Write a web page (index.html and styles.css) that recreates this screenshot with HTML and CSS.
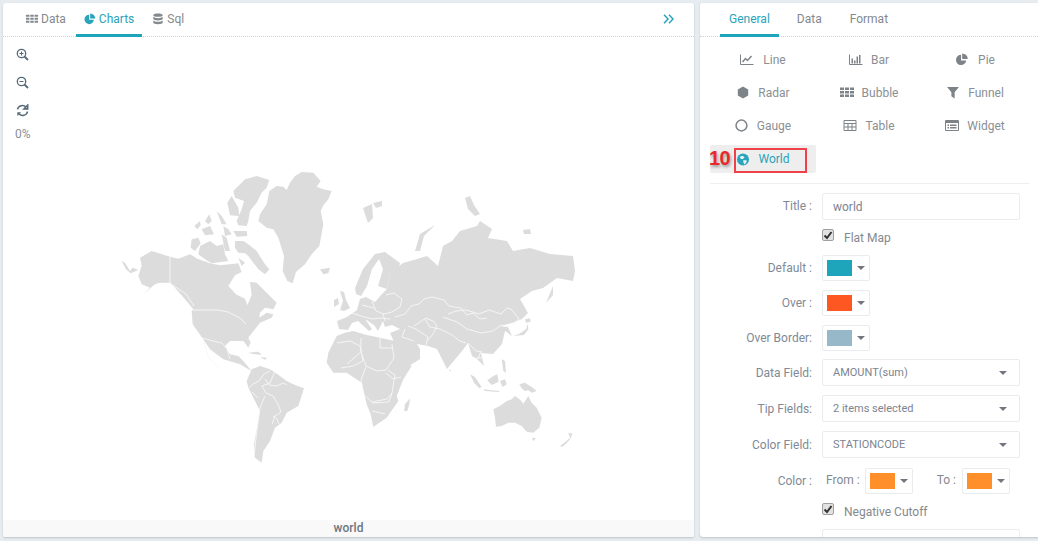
FILE: index.html
```html
<!DOCTYPE html>
<html lang="en">
<head>
<meta charset="utf-8">
<title>World chart</title>
<link rel="stylesheet" href="styles.css">
</head>
<body>
<svg class="defs" width="0" height="0" aria-hidden="true">
  <symbol id="i-th" viewBox="0 0 14 12"><path d="M0 1h4v2.500H0zM5 1h4v2.500H5zM10 1h4v2.500h-4zM0 4.500h4V7H0zM5 4.500h4V7H5zM10 4.500h4V7h-4zM0 8h4v2.500H0zM5 8h4v2.500H5zM10 8h4v2.500h-4z"/></symbol>
  <symbol id="i-pie" viewBox="0 0 14 14"><path d="M6 2a5.500 5.500 0 1 0 5.500 6H6zM7.200 .5v6h6a6 6 0 0 0-6-6z"/></symbol>
  <symbol id="i-db" viewBox="0 0 12 14"><path d="M6 .5c3 0 5.500.8 5.500 2S9 4.500 6 4.500.5 3.700.5 2.500 3 .5 6 .5zM.5 4.500c1 1 3 1.600 5.500 1.600s4.500-.6 5.500-1.600v2.200c0 1.200-2.500 2-5.500 2s-5.500-.8-5.500-2zM.5 8.800c1 1 3 1.500 5.500 1.500s4.500-.5 5.500-1.500V11c0 1.200-2.500 2-5.500 2s-5.500-.8-5.500-2z"/></symbol>
  <symbol id="i-line" viewBox="0 0 14 12"><path d="M.5 1v10h13" fill="none" stroke="currentColor"/><path d="M2.500 8.500 5.500 5l2 2 4-4.500" fill="none" stroke="currentColor" stroke-width="1.500"/></symbol>
  <symbol id="i-bar" viewBox="0 0 14 12"><path d="M.5 1v10h13" fill="none" stroke="currentColor"/><path d="M2.500 5h1.500v5H2.500zM5 7h1.500v3H5zM7.500 3h1.500v7H7.500zM10 1.500h1.500V10H10z"/></symbol>
  <symbol id="i-radar" viewBox="0 0 12 12"><path d="M6 .5 10.800 3.200V8.800L6 11.500 1.200 8.800V3.200z"/></symbol>
  <symbol id="i-filter" viewBox="0 0 12 12"><path d="M.5 1h11L7.500 5.800V11.500L4.500 9.500V5.800z"/></symbol>
  <symbol id="i-ring" viewBox="0 0 12 12"><circle cx="5.500" cy="6" r="5" fill="none" stroke="currentColor" stroke-width="1.400"/></symbol>
  <symbol id="i-table" viewBox="-.5 -1 14 13"><path d="M.5.500h12v10H.5zM.5 3.500h12M.5 7h12M4.500 3.500v7M8.500 3.500v7" fill="none" stroke="currentColor"/></symbol>
  <symbol id="i-widget" viewBox="0 0 14 11"><path d="M.5.500h13v10H.5z" fill="none" stroke="currentColor"/><path d="M1 1h12v2H1zM2.500 4.500h1.500V6H2.500zM5 4.500h6.500V6H5zM2.500 7h1.500v1.500H2.500zM5 7h6.500v1.500H5z"/></symbol>
  <symbol id="i-globe" viewBox="0 0 12 12"><circle cx="6" cy="6" r="5.500"/><path d="M3 3.500 5.500 2.500 7.500 4 6 5.500 4 5.500zM6 7 9 6.500 9.500 8 7.500 10.500 6.500 9z" fill="#e9f3f6"/></symbol>
  <symbol id="i-plus" viewBox="0 0 13 13"><circle cx="5.500" cy="5.500" r="4.200" fill="none" stroke="currentColor" stroke-width="1.300"/><path d="M8.500 8.500 12 12" stroke="currentColor" stroke-width="1.800"/><path d="M3.500 5.500h4M5.500 3.500v4" stroke="currentColor" stroke-width="1.100"/></symbol>
  <symbol id="i-minus" viewBox="0 0 13 13"><circle cx="5.500" cy="5.500" r="4.200" fill="none" stroke="currentColor" stroke-width="1.300"/><path d="M8.500 8.500 12 12" stroke="currentColor" stroke-width="1.800"/><path d="M3.500 5.500h4" stroke="currentColor" stroke-width="1.100"/></symbol>
  <symbol id="i-sync" viewBox="0 0 12 12"><path d="M1.300 5A4.700 4.700 0 0 1 9.300 3" fill="none" stroke="currentColor" stroke-width="1.400"/><path d="M10.800 1v3.500H7.300zM10.700 7A4.700 4.700 0 0 1 2.700 9" fill="none" stroke="currentColor" stroke-width="1.400"/><path d="M1.200 11V7.500h3.500z"/></symbol>
  <symbol id="i-check" viewBox="0 0 10 10"><path d="M1.500 5.500 4 8 8.500 2" fill="none" stroke="#333" stroke-width="2"/></symbol>
</svg>

<div class="app">
  <section class="panel left">
    <nav class="tabs left-tabs">
      <a class="tab"><svg class="ti"><use href="#i-th"/></svg>Data</a>
      <a class="tab active"><svg class="ti"><use href="#i-pie"/></svg>Charts</a>
      <a class="tab"><svg class="ti"><use href="#i-db"/></svg>Sql</a>
      <svg class="collapse" viewBox="0 0 11 10"><path d="M1 .8 5 5 1 9.200M6 .8 10 5 6 9.200" fill="none" stroke="currentColor" stroke-width="1.500"/></svg>
    </nav>
    <div class="canvas">
      <div class="zoombar">
        <svg class="zi"><use href="#i-plus"/></svg>
        <svg class="zi"><use href="#i-minus"/></svg>
        <svg class="zi"><use href="#i-sync"/></svg>
        <span class="pct">0%</span>
      </div>
      <svg class="map" viewBox="3 36 691 484">
        <g class="land" transform="translate(110 165) scale(.33333)">
          <polygon points="540,50 555,30 575,18 610,20 632,45 620,62 640,70 665,75 655,100 640,118 632,135 640,175 628,240 605,265 585,295 558,318 548,352 532,345 518,315 522,270 505,215 490,190 470,185 445,165 450,145 470,115 478,75 500,60 520,62 530,72"/>
          <polygon points="370,75 385,60 405,40 440,30 478,42 470,65 455,80 440,110 420,135 415,165 410,180 385,178 380,165 395,130 402,105 375,95"/>
          <polygon points="352,110 365,90 385,125 388,150 360,148"/>
          <polygon points="253,180 270,165 272,178 262,190"/>
          <polygon points="285,165 298,145 305,165 295,175"/>
          <polygon points="320,135 335,150 350,175 335,175"/>
          <polygon points="275,190 300,180 312,205 285,208"/>
          <polygon points="340,180 355,190 365,205 345,210"/>
          <polygon points="370,195 410,195 412,210 380,212"/>
          <polygon points="245,220 265,215 272,232 255,255 242,245"/>
          <polygon points="270,240 300,225 320,240 340,235 345,265 355,285 305,292 285,280 265,265"/>
          <polygon points="335,205 350,215 360,255 345,255"/>
          <polygon points="375,225 400,225 415,235 440,255 465,295 478,310 465,325 445,310 430,290 415,270 405,262 385,260 375,245"/>
          <polygon points="385,275 405,290 395,300"/>
          <polygon points="35,285 45,290 60,315 68,305 85,312 62,322 48,310"/>
          <polygon points="630,310 660,305 655,322 640,325"/>
          <polygon points="90,275 125,255 180,272 205,278 240,265 262,278 300,292 330,298 360,295 385,292 395,318 375,328 355,360 378,385 405,398 412,418 425,388 420,348 440,350 468,378 500,410 490,430 465,425 450,440 448,455 470,440 490,445 485,455 450,470 415,515 422,530 415,545 400,525 360,525 345,540 360,565 385,570 400,585 425,615 415,610 390,595 375,590 340,580 300,550 275,513 248,475 245,435 250,430 225,400 195,365 180,350 150,350 135,355 100,385 120,365 95,355 85,330 95,300"/>
        </g>
        <g class="land" transform="translate(180 310) scale(.33333)">
          <polygon points="215,175 240,165 270,175 300,195 320,210 345,222 372,232 355,285 320,305 305,335 285,350 270,390 250,420 245,455 225,440 222,400 240,300 205,230 200,210"/>
          <polygon points="445,125 470,75 495,65 520,60 560,72 600,80 645,90 665,150 695,165 670,205 650,255 655,270 620,320 580,348 572,310 560,280 545,215 500,185 460,185 440,155"/>
          <polygon points="205,125 235,122 245,132 215,128"/>
          <polygon points="240,138 262,140 255,146"/>
        </g>
        <g class="land">
          <polygon points="390,272 403,262 417,258 427,255 438,265 443,245 452,240 460,230 477,225 480,220 492,228 488,237 507,240 513,250 530,247 550,253 573,255 575,270 573,280 557,277 543,287 532,290 520,298 528,312 522,318 512,322 500,325 508,326 512,335 505,330 502,343 493,353 481,352 484,365 477,358 472,355 468,342 462,350 447,368 437,348 428,345 417,343 420,348 420,358 404,368 396,345 390,332 400,328 392,324 385,326 383,320 378,330 374,324 365,318 372,328 369,330 358,320 352,322 348,329 339,328 337,320 347,316 357,309 360,298 366,296 375,301 382,293 387,288"/>
          <polygon points="355,287 363,268 375,253 385,251 400,262 398,270 390,272 387,288 378,285 383,268 379,258 372,268 367,285 361,295 356,293"/>
          <polygon points="340,290 344,291 346,299 350,307 344,310 340,309 343,300"/>
          <polygon points="334,299 338,297 339,303 334,306"/>
          <polygon points="363,207 372,203 373,217 368,222"/>
          <polygon points="373,202 382,200 382,205 376,207"/>
          <polygon points="415,250 420,233 435,224 424,235 420,250"/>
          <polygon points="465,197 470,195 474,204 480,213 475,215 468,208"/>
          <polygon points="523,229 530,228 531,233 524,233"/>
          <polygon points="546,302 553,285 553,294"/>
        </g>
        <g class="land" transform="translate(400 310) scale(.33333)">
          <polygon points="210,190 225,198 245,228 238,232 222,215"/>
          <polygon points="262,208 280,195 292,190 296,212 275,222"/>
          <polygon points="250,235 275,238 300,240 295,243 255,240"/>
          <polygon points="300,210 315,205 320,220 308,228"/>
          <polygon points="358,220 375,215 395,228 410,240 395,245 385,238 375,240 365,232"/>
          <polygon points="305,145 315,150 318,185 310,180"/>
          <polygon points="280,295 300,285 320,270 335,265 345,255 362,268 370,278 385,255 395,275 410,290 425,320 418,350 400,365 380,362 365,345 345,335 325,335 305,345 288,347 285,320"/>
          <polygon points="395,380 408,382 400,390"/>
          <polygon points="480,405 497,392 510,380 505,365 518,368 510,385 498,398 488,407"/>
          <polygon points="12,300 15,280 30,262 28,280 22,300"/>
          <polygon points="375,25 390,22 392,32 378,35"/>
          <polygon points="340,75 358,68 378,55 383,38 385,55 372,72"/>
          <polygon points="148,175 153,178 150,183"/>
        </g>
        <g class="borders">
          <path d="M170 256v26l7 5 9 6 8 12M193 309h25l10 2 12 6 6 6M203 337l10 3 9 2 5 6 3 10"/>
          <path d="M203 338l6 20 10 8"/>
          <path d="M270 370l-6 3-5 7-6 3-4 4M275 370l-5 12-8 3 4 7 7 3 5 8 3 8-6 4-3 8M265 378l4 6 8 1 6-3 4 2M258 397l-6-6M265 395l-5 12-4 30-2 20M273 415l4 3 2 5"/>
          <path d="M337 342l13-2 10 5 3 15-10 5-12 2M361 337v14l5 14 11 5 9-1 8-12-2-14M380 337v10h13M362 350l-15 13M366 366l-5 13 3 15 9 8 16-1 3-9 3-18-7-5M386 372l7 6 8-2M372 401l15-3 5-6M372 410l13 3"/>
          <path d="M372 300l4 10 8 3 8-2 8-5 2-8-8-6-8 2M352 312l12 4 9 2 8-1 9 1M362 304l12 3M383 313l2 7M395 316l10-3 6-8 8-2 5-5 8-2 12 3 5 6 12 2 6 7 6-2 7 6 7-1M425 318l5 8 10 2 12 6 8 6 6 2M448 313l8-3 10-1 13 4 10-4 12 4 6-6 4 1 8 10-10 8-8-2-8 6-12 2-14-4-10-7-14-5M414 325l12-8 7 3 4 5-4 8-6 7M408 325l8 3 12 8-2 8M405 328l-3 8 12 4"/>
          <path d="M468 342l8 8 6 1M481 350l-3 8M476 357h8"/>
        </g>
      </svg>
    </div>
    <div class="caption">world</div>
  </section>

  <section class="panel right">
    <nav class="tabs right-tabs">
      <a class="tab active">General</a>
      <a class="tab">Data</a>
      <a class="tab">Format</a>
    </nav>
    <div class="types">
      <a class="type"><svg class="ci"><use href="#i-line"/></svg><span class="gap-l">Line</span></a>
      <a class="type"><svg class="ci"><use href="#i-bar"/></svg><span>Bar</span></a>
      <a class="type"><svg class="ci"><use href="#i-pie"/></svg><span class="gap-l">Pie</span></a>
      <a class="type"><svg class="ci"><use href="#i-radar"/></svg><span>Radar</span></a>
      <a class="type"><svg class="ci"><use href="#i-th"/></svg><span>Bubble</span></a>
      <a class="type"><svg class="ci"><use href="#i-filter"/></svg><span>Funnel</span></a>
      <a class="type"><svg class="ci"><use href="#i-ring"/></svg><span>Gauge</span></a>
      <a class="type"><svg class="ci"><use href="#i-table"/></svg><span>Table</span></a>
      <a class="type"><svg class="ci"><use href="#i-widget"/></svg><span>Widget</span></a>
      <a class="type selected"><svg class="ci"><use href="#i-globe"/></svg><span>World</span><b class="callout">10</b><i class="redbox"></i></a>
    </div>
    <form class="form">
      <div class="row r-title"><label class="lbl up">Title :</label><div class="field text">world</div></div>
      <div class="row r-check"><span class="lbl"></span><span class="cb"><svg class="tick"><use href="#i-check"/></svg></span><span class="cbtext">Flat Map</span></div>
      <div class="row r-pick"><label class="lbl">Default :</label><div class="picker"><i class="sw c-teal"></i><i class="caret"></i></div></div>
      <div class="row r-pick"><label class="lbl">Over :</label><div class="picker"><i class="sw c-red"></i><i class="caret"></i></div></div>
      <div class="row r-pick"><label class="lbl">Over Border:</label><div class="picker"><i class="sw c-blue"></i><i class="caret"></i></div></div>
      <div class="row r-sel"><label class="lbl">Data Field:</label><div class="field select">AMOUNT(sum)<i class="caret"></i></div></div>
      <div class="row r-sel"><label class="lbl">Tip Fields:</label><div class="field select">2 items selected<i class="caret"></i></div></div>
      <div class="row r-sel"><label class="lbl">Color Field:</label><div class="field select">STATIONCODE<i class="caret"></i></div></div>
      <div class="row r-color"><label class="lbl">Color :</label><span class="from">From :</span><div class="picker"><i class="sw c-orange"></i><i class="caret"></i></div><span class="to">To :</span><div class="picker"><i class="sw c-orange"></i><i class="caret"></i></div></div>
      <div class="row r-check neg"><span class="lbl"></span><span class="cb"><svg class="tick"><use href="#i-check"/></svg></span><span class="cbtext">Negative Cutoff</span></div>
      <div class="row r-last"><span class="lbl"></span><div class="field text"></div></div>
    </form>
  </section>
</div>
</body>
</html>
```
FILE: styles.css
```css
html, body { margin: 0; height: 100%; }
body {
  background: #e6ecef;
  font-family: Roboto, "Liberation Sans", sans-serif;
  font-size: 12px;
  color: #7f8a96;
  overflow: hidden;
}
.defs { position: absolute; }
svg { fill: currentColor; display: block; }
.app { display: flex; gap: 6px; height: 534px; padding: 3px 0 0 3px; }
.panel {
  background: #fff;
  border-radius: 3px 3px 2px 2px;
  box-shadow: 0 1px 2px rgba(90,110,120,.3);
  display: flex;
  flex-direction: column;
  overflow: hidden;
  height: 534px;
}
.left { width: 691px; }
.right { width: 338px; border-radius: 3px 0 0 3px; }

.tabs {
  display: flex;
  height: 33px;
  flex: none;
  border-bottom: 1px dotted #cfd4d7;
}
.left-tabs { padding-left: 15px; }
.right-tabs { padding-left: 20px; }
.tab {
  display: flex;
  align-items: center;
  gap: 3px;
  height: 34px;
  box-sizing: border-box;
  color: #84898e;
  border-bottom: 3px solid transparent;
}
.left-tabs .tab { padding: 0 8px; margin-right: 2px; }
.right-tabs .tab { padding: 0 9px; }
.right-tabs .tab:nth-child(2) { padding: 0; margin-left: 18px; }
.right-tabs .tab:nth-child(3) { padding: 0; margin-left: 28px; }
.tab.active { color: #29a4bb; border-bottom-color: #1fa5bb; }
.ti { width: 12px; height: 12px; }
.collapse { width: 11px; height: 10px; margin: 11px 20px 0 auto; color: #29a4bb; fill: none; }

.canvas { flex: 1; position: relative; min-height: 0; }
.map { width: 691px; height: 484px; }
.zoombar {
  position: absolute;
  left: 13px;
  top: 11px;
  display: flex;
  flex-direction: column;
  align-items: flex-start;
  gap: 15px;
  color: #566b7a;
}
.zi { width: 13px; height: 13px; }
.pct { margin-top: -5px; margin-left: -1px; line-height: 14px; color: #8a8f94; }
.caption {
  flex: none;
  height: 17px;
  line-height: 16px;
  background: #f9f9f9;
  text-align: center;
  font-weight: 500;
  color: #6d7680;
}
.land polygon { fill: #dcdcdc; stroke: none; }
.borders path { fill: none; stroke: #f7f7f7; stroke-width: .9; }

.types {
  display: grid;
  grid-template-columns: repeat(3, 106px);
  grid-auto-rows: 33px;
  padding: 6px 0 0 10px;
  flex: none;
}
.type {
  display: flex;
  justify-content: center;
  align-items: center;
  gap: 8px;
  color: #8a8f94;
  position: relative;
  height: 33px;
}
.gap-l { margin-left: 1px; }
.ci { width: 14px; height: 13px; color: #7d8387; }
.selected {
  color: #29a4bb;
  background: #eee;
  height: 28px;
  margin-top: 3px;
  border-radius: 2px;
}
.selected .ci { color: #29a4bb; }
.callout {
  position: absolute;
  left: -1px;
  top: 1px;
  color: #e8292c;
  font-size: 20px;
  letter-spacing: -.5px;
  line-height: 24px;
  font-weight: 700;
  font-family: "Liberation Sans", sans-serif;
  text-shadow: 1px 2px 3px rgba(0,0,0,.35);
}
.redbox {
  position: absolute;
  left: 24px;
  top: 3px;
  width: 73px;
  height: 25px;
  box-sizing: border-box;
  border: 2px solid #f04048;
}

.form {
  margin: 8px 9px 0 10px;
  border-top: 1px solid #ecefef;
  padding-top: 9px;
  flex: none;
}
.row { display: flex; align-items: center; }
.lbl {
  width: 102px;
  flex: none;
  text-align: right;
  margin-right: 10px;
  color: #7f8a96;
  line-height: 14px;
}
.up { margin-top: -2px; }
.field {
  box-sizing: border-box;
  width: 198px;
  height: 27px;
  border: 1px solid #e8ecee;
  border-radius: 2px;
  background: #fff;
  display: flex;
  align-items: center;
  padding-left: 10px;
  color: #7c8490;
}
.select { font-size: 11px; }
.select .caret { margin: 0 12px 0 auto; }
.caret {
  display: block;
  width: 0; height: 0;
  border-left: 4px solid transparent;
  border-right: 4px solid transparent;
  border-top: 4px solid #72767e;
}
.r-check { height: 16px; margin-top: 10px; }
.cb {
  box-sizing: border-box;
  width: 12px; height: 12px;
  border: 1px solid #a0a0a0;
  border-radius: 2px;
  background: #e2e2e2;
  margin-top: -6px;
  display: flex;
  align-items: center;
  justify-content: center;
  flex: none;
}
.tick { width: 10px; height: 10px; }
.cbtext { margin-left: 10px; color: #84898e; line-height: 14px; }
.picker {
  box-sizing: border-box;
  width: 48px;
  height: 26px;
  border: 1px solid #e8ecee;
  border-radius: 2px;
  display: flex;
  align-items: center;
  padding-left: 4px;
  gap: 5px;
  flex: none;
}
.sw { display: block; width: 25px; height: 16px; }
.c-teal { background: #1fa5bb; }
.c-red { background: #ff5722; }
.c-blue { background: #97b8c9; }
.c-orange { background: #ff8f2b; }
.r-pick { margin-top: 9px; }
.r-check + .r-pick { margin-top: 9px; }
.r-sel { margin-top: 9px; }
.r-pick + .r-sel { margin-top: 8px; }
.r-color { margin-top: 10px; }
.from { margin: -2px 5px 0 4px; color: #84898e; }
.to { margin: -2px 6px 0 24px; color: #84898e; }
.neg { margin-top: 10px; }
.r-last { margin-top: 9px; }
```
